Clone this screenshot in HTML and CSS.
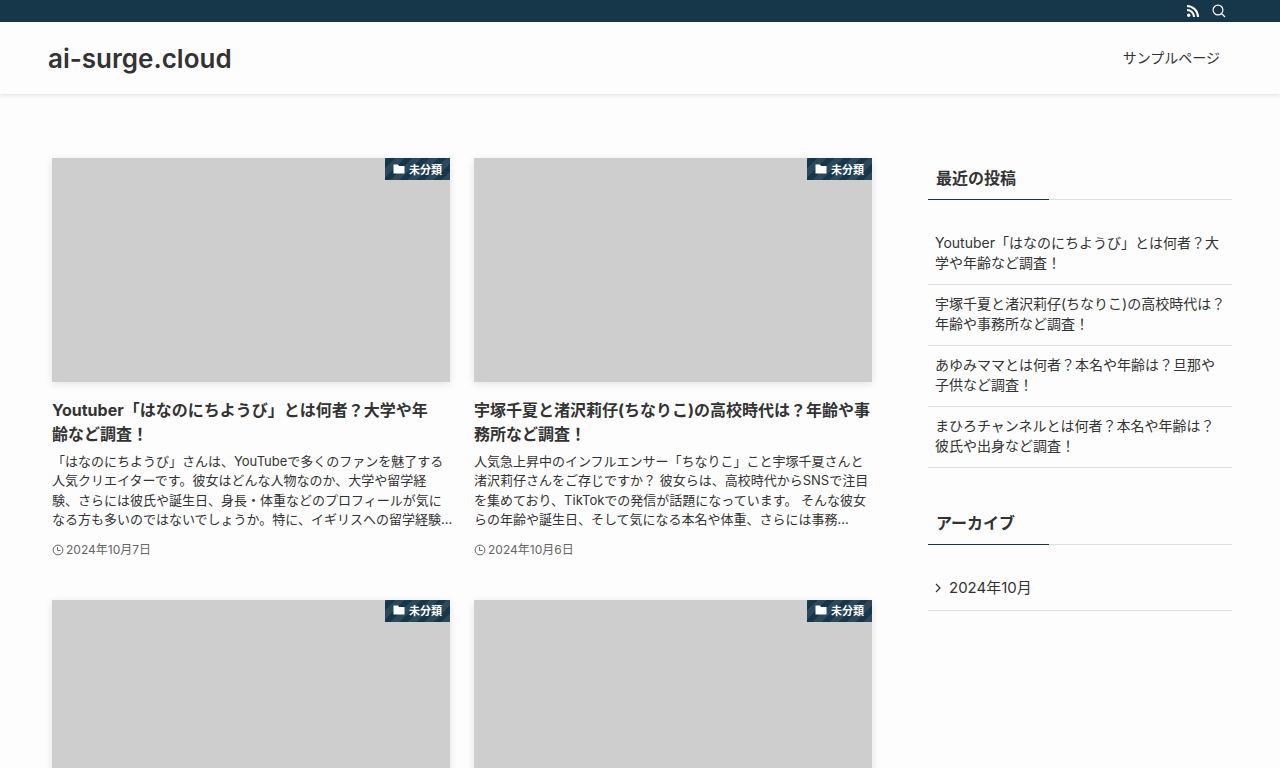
FILE: index.html
```html
<!DOCTYPE html>
<html lang="ja">
<head>
    <meta charset="UTF-8">
    <meta name="viewport" content="width=device-width, initial-scale=1.0">
    <title>ai-surge.cloud</title>
    <link rel="stylesheet" href="styles.css">
</head>
<body>
    <svg class="sprite" aria-hidden="true">
        <symbol id="icon-folder" viewBox="0 0 12 12">
            <path d="M.5 1.500h4.500l1 1.500h5.500v7.500h-11z" fill="currentColor"/>
        </symbol>
        <symbol id="icon-clock" viewBox="0 0 12 12">
            <circle cx="6" cy="6" r="4.900" fill="none" stroke="currentColor"/>
            <path d="M5.500 3v3.500h3" fill="none" stroke="currentColor"/>
        </symbol>
    </svg>

    <div class="topbar">
        <div class="inner topbar-inner">
            <a class="topbar-link" href="#" aria-label="RSS">
                <svg viewBox="0 0 14 14" width="14" height="14" fill="none" stroke="currentColor" stroke-width="2">
                    <circle cx="2.700" cy="11.300" r="1.700" fill="currentColor" stroke="none"/>
                    <path d="M1 6a7 7 0 0 1 7 7M1 2a11 11 0 0 1 11 11"/>
                </svg>
            </a>
            <button class="topbar-link" type="button" aria-label="検索">
                <svg viewBox="0 0 14 14" width="14" height="14" fill="none" stroke="currentColor" stroke-width="1.200">
                    <circle cx="6" cy="6" r="4.900"/>
                    <path d="M9.500 9.500l3.500 3.500"/>
                </svg>
            </button>
        </div>
    </div>

    <header class="header">
        <div class="inner header-inner">
            <a class="logo" href="#">ai-surge.cloud</a>
            <nav class="nav">
                <a class="nav-link" href="#">サンプルページ</a>
            </nav>
        </div>
    </header>

    <div class="inner content">
        <main class="post-list">
            <article class="post">
                <a class="post-link" href="#">
                    <div class="thumb">
                        <span class="category"><svg class="icon"><use href="#icon-folder"/></svg>未分類</span>
                    </div>
                    <h2 class="post-title">Youtuber「はなのにちようび」とは何者？大学や年<br>齢など調査！</h2>
                    <p class="excerpt">「はなのにちようび」さんは、YouTubeで多くのファンを魅了する人気クリエイターです。彼女はどんな人物なのか、大学や留学経<br>験、さらには彼氏や誕生日、身長・体重などのプロフィールが気になる方も多いのではないでしょうか。特に、イギリスへの留学経験...</p>
                    <div class="date"><svg class="icon"><use href="#icon-clock"/></svg><time datetime="2024-10-07">2024年10月7日</time></div>
                </a>
            </article>
            <article class="post">
                <a class="post-link" href="#">
                    <div class="thumb">
                        <span class="category"><svg class="icon"><use href="#icon-folder"/></svg>未分類</span>
                    </div>
                    <h2 class="post-title">宇塚千夏と渚沢莉仔(ちなりこ)の高校時代は？年齢や事務所など調査！</h2>
                    <p class="excerpt">人気急上昇中のインフルエンサー「ちなりこ」こと宇塚千夏さんと渚沢莉仔さんをご存じですか？ 彼女らは、高校時代からSNSで注目を集めており、TikTokでの発信が話題になっています。 そんな彼女らの年齢や誕生日、そして気になる本名や体重、さらには事務...</p>
                    <div class="date"><svg class="icon"><use href="#icon-clock"/></svg><time datetime="2024-10-06">2024年10月6日</time></div>
                </a>
            </article>
            <article class="post">
                <a class="post-link" href="#">
                    <div class="thumb">
                        <span class="category"><svg class="icon"><use href="#icon-folder"/></svg>未分類</span>
                    </div>
                </a>
            </article>
            <article class="post">
                <a class="post-link" href="#">
                    <div class="thumb">
                        <span class="category"><svg class="icon"><use href="#icon-folder"/></svg>未分類</span>
                    </div>
                </a>
            </article>
        </main>

        <aside class="sidebar">
            <section class="widget">
                <h2 class="widget-title">最近の投稿</h2>
                <ul class="widget-list">
                    <li><a href="#">Youtuber「はなのにちようび」とは何者？大学や年齢など調査！</a></li>
                    <li><a href="#">宇塚千夏と渚沢莉仔(ちなりこ)の高校時代は？年齢や事務所など調査！</a></li>
                    <li><a href="#">あゆみママとは何者？本名や年齢は？旦那や子供など調査！</a></li>
                    <li><a href="#">まひろチャンネルとは何者？本名や年齢は？彼氏や出身など調査！</a></li>
                </ul>
            </section>
            <section class="widget">
                <h2 class="widget-title">アーカイブ</h2>
                <ul class="widget-list archive">
                    <li>
                        <a href="#">
                            <svg viewBox="0 0 6 10" width="6" height="10" fill="none" stroke="currentColor" stroke-width="1.200"><path d="M1 1l4 4-4 4"/></svg>
                            2024年10月
                        </a>
                    </li>
                </ul>
            </section>
        </aside>
    </div>
</body>
</html>
```

FILE: styles.css
```css
* {
    box-sizing: border-box;
}

body {
    margin: 0;
    background-color: #fdfdfd;
    color: #333;
    font-family: Inter, "Noto Sans CJK JP", sans-serif;
    font-size: 14px;
}

a {
    color: inherit;
    text-decoration: none;
}

.sprite {
    display: none;
}

.inner {
    padding: 0 48px;
}

/* ヘッダー */
.topbar {
    background-color: #163649;
    color: #fff;
}

.topbar-inner {
    display: flex;
    justify-content: flex-end;
    align-items: center;
    height: 22px;
}

.topbar-link {
    display: flex;
    padding: 0 6px;
    border: none;
    background: none;
    color: inherit;
    cursor: pointer;
}

.header {
    box-shadow: 0 1px 4px rgba(0, 0, 0, 0.12);
}

.header-inner {
    display: flex;
    justify-content: space-between;
    align-items: center;
    height: 72px;
}

.logo {
    font-size: 26px;
    font-weight: 600;
}

.nav {
    padding-bottom: 3px;
}

.nav-link {
    padding: 0 12px;
}

/* 記事一覧 */
.content {
    display: grid;
    grid-template-columns: minmax(0, 1fr) 304px;
    gap: 52px;
    padding-top: 64px;
}

.post-list {
    display: grid;
    grid-template-columns: 1fr 1fr;
    align-content: start;
    gap: 41px 24px;
    padding: 0 4px;
}

.post-link {
    display: block;
}

.thumb {
    position: relative;
    aspect-ratio: 16 / 9;
    background-color: #cecece;
    box-shadow: 0 2px 8px rgba(0, 0, 0, 0.1);
}

.category {
    position: absolute;
    top: 0;
    right: 0;
    display: flex;
    align-items: center;
    gap: 4px;
    height: 22px;
    padding: 0 8px 1px;
    background: repeating-linear-gradient(-45deg, #2b495b 0, #2b495b 6px, #163649 6px, #163649 12px);
    color: #fff;
    font-size: 11px;
    font-weight: bold;
}

.icon {
    flex: none;
    width: 12px;
    height: 12px;
}

.post-title {
    margin: 16px 0 0;
    font-size: 16px;
    line-height: 24px;
}

.excerpt {
    margin: 6px -3px 0 0;
    font-size: 13px;
    line-height: 1.5;
}

.date {
    display: flex;
    align-items: center;
    gap: 2px;
    margin-top: 11px;
    color: #666;
    font-size: 12px;
    line-height: 18px;
}

/* サイドバー */
.widget {
    margin-bottom: 35px;
}

.widget-title {
    margin: 0 0 24px;
    padding: 8px;
    border-bottom: 1px solid;
    border-image: linear-gradient(90deg, #163649 40%, #dfdfdf 40%) 1;
    font-size: 16px;
    line-height: 25px;
}

.widget-list {
    margin: 0;
    padding: 0;
    list-style: none;
}

.widget-list li {
    border-bottom: 1px solid #dfdfdf;
}

.widget-list a {
    display: block;
    padding: 9px 5px 11px 7px;
    line-height: 20px;
}

.archive a {
    display: flex;
    align-items: center;
    gap: 8px;
    padding: 8px 7px 12px;
    font-size: 15px;
    line-height: 21px;
}
```
